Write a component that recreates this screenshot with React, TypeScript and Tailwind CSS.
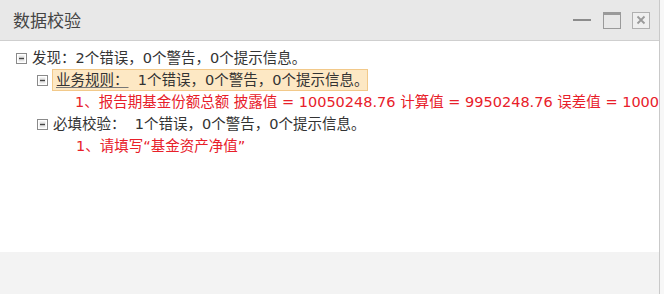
import React from "react"

const font = { fontFamily: '"DejaVu Sans", "Noto Sans CJK SC", sans-serif' }

// tree toggle box (minus)
const Toggle = () => (
  <svg width="11" height="11" viewBox="0 0 11 11" className="shrink-0">
    <rect x="0.5" y="0.5" width="10" height="10" fill="#fff" stroke="#8a8a8a" />
    <rect x="2.5" y="2.5" width="6" height="6" fill="#e6e6e6" />
    <line x1="3" y1="5.5" x2="8" y2="5.5" stroke="#444" strokeWidth="1.4" />
  </svg>
)

export default function App() {
  return (
    <div className="w-[664px] h-[294px] flex bg-[#f7f7f7] overflow-hidden" style={font}>
      <div className="w-[660px] h-full flex flex-col border-r border-[#c9c9c9]">
        {/* title bar */}
        <div className="h-[41px] shrink-0 flex items-center justify-between bg-[#e8e8e8] border-b border-[#cfcfcf] pl-[13px] pr-[9px]">
          <span className="text-[17px] text-[#444] font-['Noto_Sans_CJK_SC']">数据校验</span>
          <div className="flex items-center gap-[11px]">
            <div className="w-[18px] h-[2px] bg-[#8c8c8c] mr-[1px]" />
            <div className="w-[18px] h-[17px] border border-[#9a9a9a] border-t-[3px]" />
            <div className="w-[18px] h-[17px] border border-[#b0b0b0] bg-[#efefef] flex items-center justify-center">
              <svg width="10" height="10" viewBox="0 0 10 10">
                <path d="M1.5 1.5 L8.5 8.5 M8.5 1.5 L1.5 8.5" stroke="#9a9a9a" strokeWidth="1.8" />
              </svg>
            </div>
          </div>
        </div>

        {/* content */}
        <div className="h-[211px] shrink-0 bg-white pt-[6px] overflow-hidden text-[14.5px] leading-[22px] text-[#333] whitespace-pre">
          <div className="flex items-center gap-[5px] pl-[16px]">
            <Toggle />
            <span>发现：2个错误，0个警告，0个提示信息。</span>
          </div>
          <div className="flex items-center gap-[4px] pl-[37px]">
            <Toggle />
            <span className="bg-[#fde8c4] border border-[#f2c98a] px-[3px] leading-[20px] w-[316px]">
              <span className="underline underline-offset-2 decoration-[#777]">业务规则：</span>
              {"  1个错误，0个警告，0个提示信息。"}
            </span>
          </div>
          <div className="pl-[75px] text-[#e8202a]">
            1、报告期基金份额总额 披露值 = 10050248.76 计算值 = 9950248.76 误差值 = 100000.00
          </div>
          <div className="flex items-center gap-[5px] pl-[37px]">
            <Toggle />
            <span>必填校验：  1个错误，0个警告，0个提示信息。</span>
          </div>
          <div className="pl-[76px] text-[#e8202a]">1、请填写“基金资产净值”</div>
        </div>

        <div className="flex-1 bg-[#f3f3f3]" />
      </div>
    </div>
  )
}
